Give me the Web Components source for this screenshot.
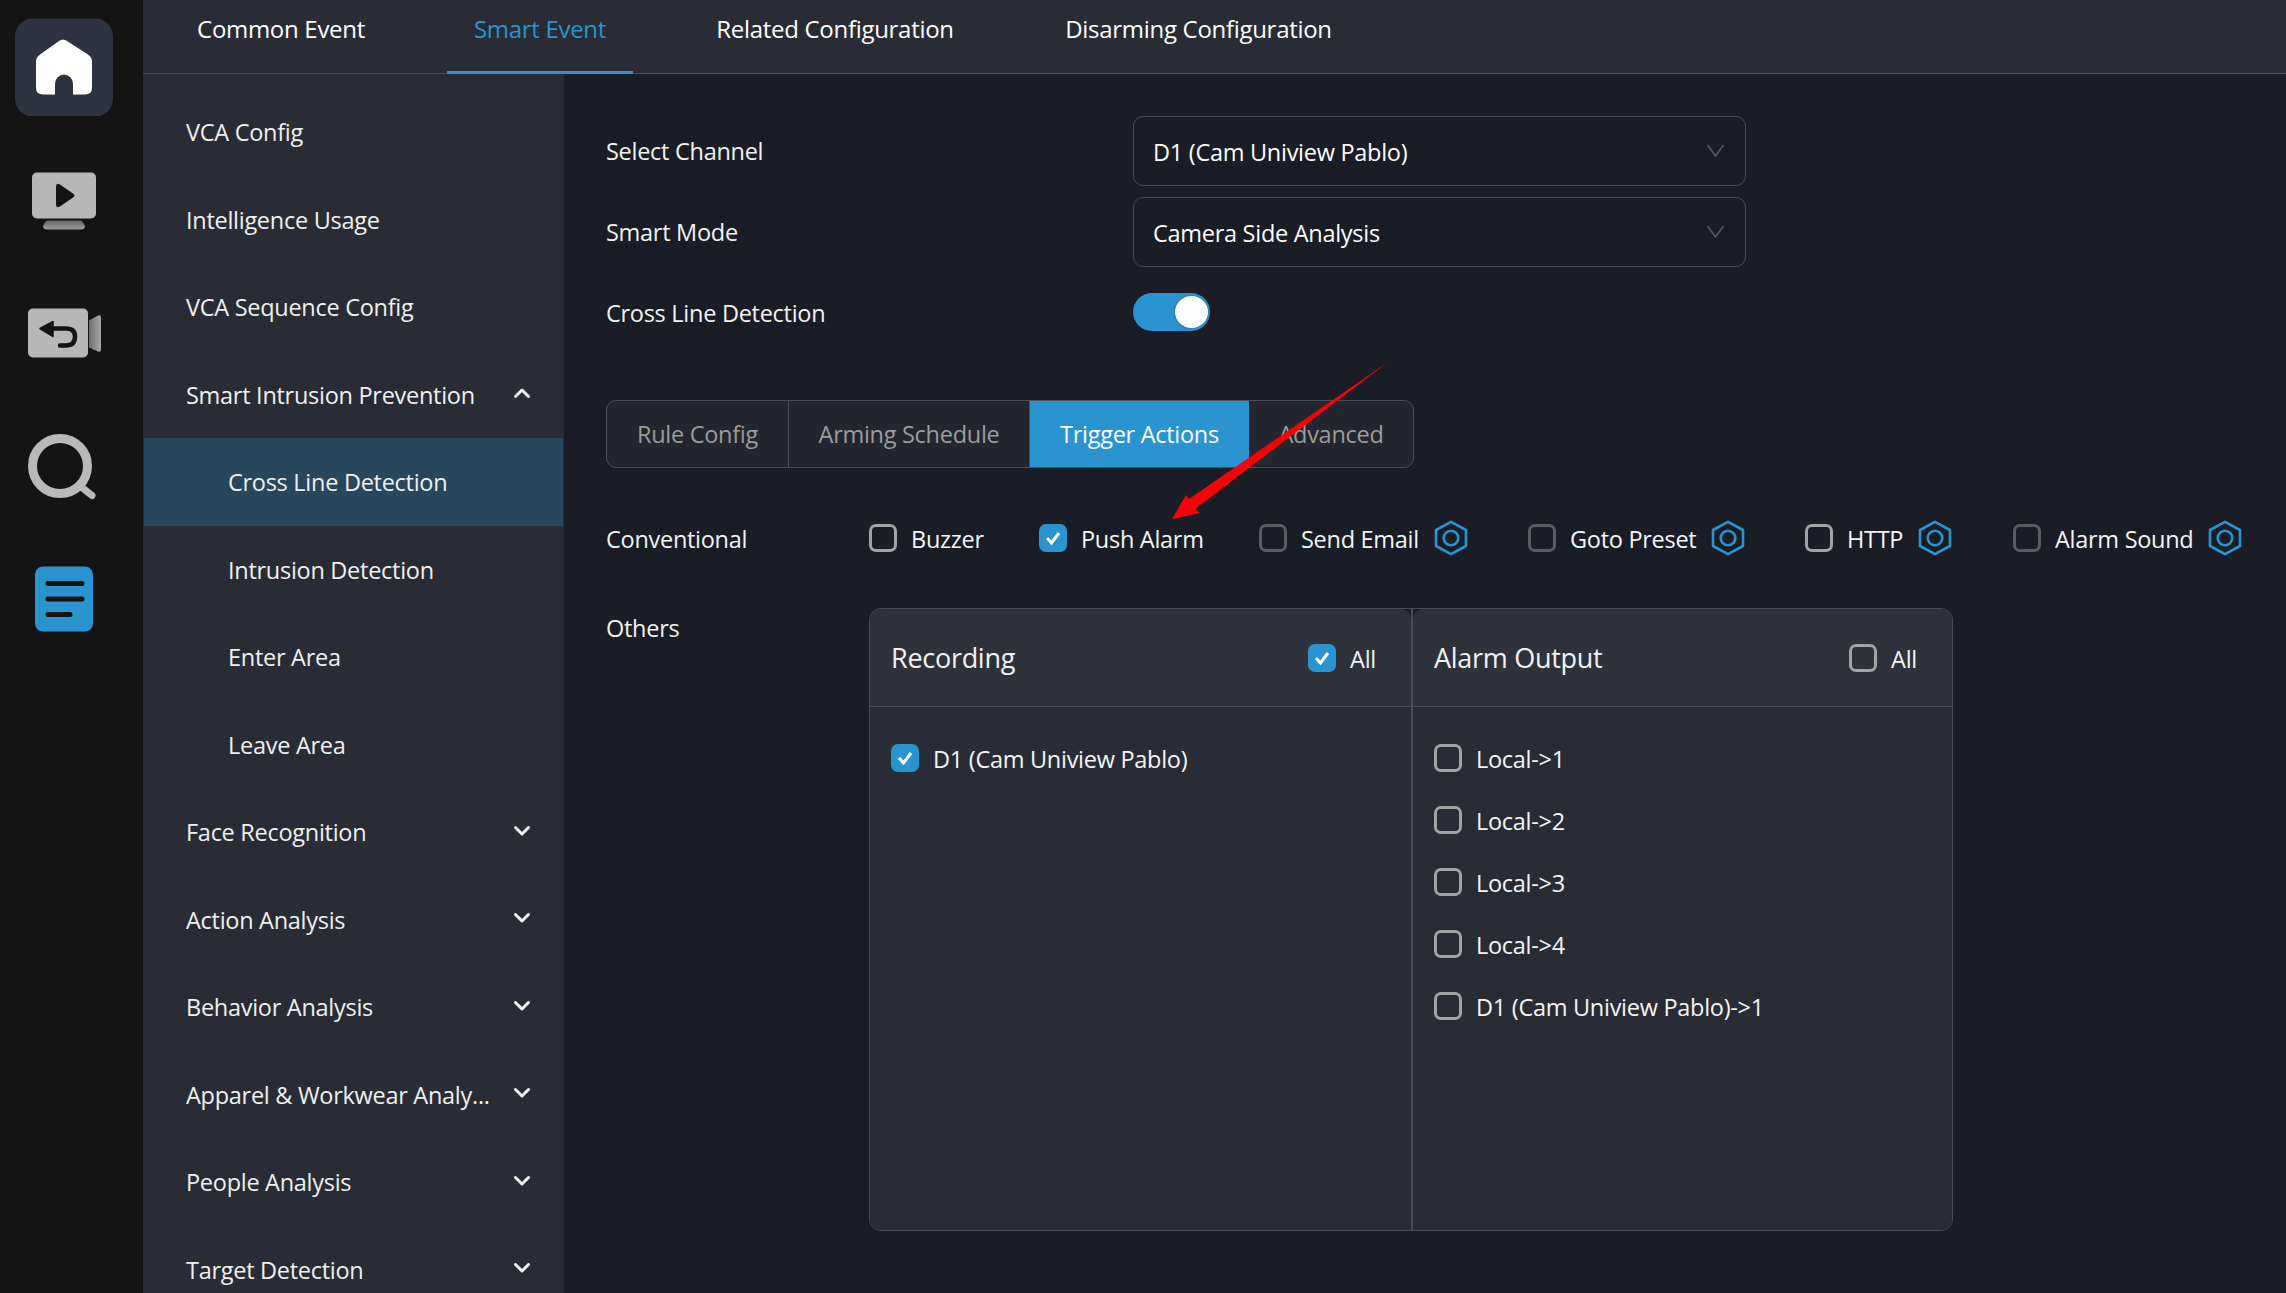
<!DOCTYPE html>
<html lang="en">
<head>
<meta charset="utf-8">
<title>Smart Event</title>
<style>
html, body { margin: 0; background: #1a1d25; }
body { font-family: 'Open Sans', 'Noto Sans', sans-serif; font-size: 23.5px; letter-spacing: -0.28px; color: #f2f2f2; }
</style>
</head>
<body>
<app-shell>
  <app-rail slot="rail">
    <rail-icon><svg viewBox="15 17.5 98 98"><rect x="15" y="18" width="98" height="98" rx="18" fill="#2e333f"/><path d="M63 39 Q65 39 67 40.5 L88 54 Q92 57 92 61 V87 Q92 94 85 94 H73 V83 A9 9 0 0 0 55 83 V94 H43 Q36 94 36 87 V61 Q36 57 40 54 L59 40.5 Q61 39 63 39Z" fill="#fff"/></svg></rail-icon>
    <rail-icon><svg viewBox="15 150.5 98 98"><defs><linearGradient id="st" x1="0" y1="0" x2="0" y2="1"><stop offset="0" stop-color="#666"/><stop offset="1" stop-color="#9a9a9a"/></linearGradient></defs><rect x="32" y="172" width="64" height="46" rx="5" fill="#b7b7b7"/><path d="M47 220 H81 Q85 224 85 226 Q85 229 81 229 H47 Q43 229 43 226 Q43 224 47 220Z" fill="url(#st)"/><path d="M56 186 Q56 182 60 184 L73 193 Q76 195 73 197 L60 206 Q56 208 56 204Z" fill="#141414"/></svg></rail-icon>
    <rail-icon><svg viewBox="15 283.5 98 98"><defs><linearGradient id="ln" x1="0" y1="0" x2="1" y2="0"><stop offset="0" stop-color="#707070"/><stop offset="1" stop-color="#a8a8a8"/></linearGradient></defs><rect x="28" y="308" width="60" height="49" rx="5" fill="#b7b7b7"/><path d="M89 320 L98 315 Q101 314 101 317 V349 Q101 352 98 351 L89 347Z" fill="url(#ln)"/><path d="M40 328 L53 321 V336Z" fill="#141414" stroke="#141414" stroke-width="1.5" stroke-linejoin="round"/><path d="M52 328 H66 Q75 328 75 336 Q75 345 66 345 H60" fill="none" stroke="#141414" stroke-width="4.5" stroke-linecap="round"/></svg></rail-icon>
    <rail-icon><svg viewBox="15 416.5 98 98"><circle cx="60" cy="465.5" r="27.5" fill="none" stroke="#b9b9b9" stroke-width="9"/><path d="M82 487 L92 495" stroke="#b9b9b9" stroke-width="7" stroke-linecap="round"/></svg></rail-icon>
    <rail-icon><svg viewBox="15 549.5 98 98"><rect x="35" y="566" width="58" height="65" rx="8" fill="#2a94d0"/><path d="M48 583 H82 M48 598.5 H82 M48 614 H70" stroke="#141414" stroke-width="5" stroke-linecap="round"/></svg></rail-icon>
  </app-rail>

  <top-tabs slot="top">
    <top-tab style="width:224px">Common Event</top-tab>
    <top-tab style="width:186px" active>Smart Event</top-tab>
    <top-tab style="width:296px">Related Configuration</top-tab>
    <top-tab style="width:323px">Disarming Configuration</top-tab>
  </top-tabs>

  <side-menu slot="side">
    <side-item>VCA Config</side-item>
    <side-item>Intelligence Usage</side-item>
    <side-item>VCA Sequence Config</side-item>
    <side-item chevron="up">Smart Intrusion Prevention</side-item>
    <side-item sub active>Cross Line Detection</side-item>
    <side-item sub>Intrusion Detection</side-item>
    <side-item sub>Enter Area</side-item>
    <side-item sub>Leave Area</side-item>
    <side-item chevron="down">Face Recognition</side-item>
    <side-item chevron="down">Action Analysis</side-item>
    <side-item chevron="down">Behavior Analysis</side-item>
    <side-item chevron="down">Apparel &amp; Workwear Analy...</side-item>
    <side-item chevron="down">People Analysis</side-item>
    <side-item chevron="down">Target Detection</side-item>
  </side-menu>

  <main-pane slot="main">
    <form-row label="Select Channel"><select-box>D1 (Cam Uniview Pablo)</select-box></form-row>
    <form-row label="Smart Mode"><select-box>Camera Side Analysis</select-box></form-row>
    <form-row label="Cross Line Detection"><toggle-switch></toggle-switch></form-row>

    <seg-tabs>
      <seg-tab style="width:182px">Rule Config</seg-tab>
      <seg-tab style="width:241px">Arming Schedule</seg-tab>
      <seg-tab style="width:219px" active>Trigger Actions</seg-tab>
      <seg-tab style="width:165px">Advanced</seg-tab>
    </seg-tabs>

    <conv-row label="Conventional">
      <check-box style="width:170px" bright>Buzzer</check-box>
      <check-box style="width:220px" checked>Push Alarm</check-box>
      <check-box style="width:269px">Send Email<hex-gear></hex-gear></check-box>
      <check-box style="width:277px">Goto Preset<hex-gear></hex-gear></check-box>
      <check-box style="width:208px" bright>HTTP<hex-gear></hex-gear></check-box>
      <check-box>Alarm Sound<hex-gear></hex-gear></check-box>
    </conv-row>

    <others-row label="Others">
      <list-panel>
        <panel-col title="Recording" style="width:543px">
          <check-box slot="all" checked>All</check-box>
          <panel-row><check-box checked>D1 (Cam Uniview Pablo)</check-box></panel-row>
        </panel-col>
        <panel-col title="Alarm Output" style="flex:1">
          <check-box slot="all" bright>All</check-box>
          <panel-row><check-box bright>Local-&gt;1</check-box></panel-row>
          <panel-row><check-box bright>Local-&gt;2</check-box></panel-row>
          <panel-row><check-box bright>Local-&gt;3</check-box></panel-row>
          <panel-row><check-box bright>Local-&gt;4</check-box></panel-row>
          <panel-row><check-box bright>D1 (Cam Uniview Pablo)-&gt;1</check-box></panel-row>
        </panel-col>
      </list-panel>
    </others-row>
  </main-pane>

  <red-arrow></red-arrow>
</app-shell>

<script>
const make = (name, css, html) => {
  customElements.define(name, class extends HTMLElement {
    connectedCallback() {
      if (this.shadowRoot) return;
      const root = this.attachShadow({mode: 'open'});
      const markup = typeof html === 'function' ? html(this) : html;
      root.innerHTML = `<style>${css}</style>${markup}`;
    }
  });
};

make('app-shell', `
  :host { display: grid; grid-template-columns: 143px 421px 1fr; grid-template-rows: 74px 1fr; width: 2286px; height: 1293px; overflow: hidden; position: relative; }
  .rail { grid-row: 1 / 3; }
  .top { grid-column: 2 / 4; }
`, `
  <div class="rail"><slot name="rail"></slot></div>
  <div class="top"><slot name="top"></slot></div>
  <slot name="side"></slot>
  <slot name="main"></slot>
  <slot></slot>
`);

make('app-rail', `:host { display: flex; flex-direction: column; height: 1293px; background: #141414; }`, `<slot></slot>`);
make('rail-icon', `
  :host { display: flex; height: 133px; align-items: center; padding-left: 15px; flex: none; }
  ::slotted(svg) { width: 98px; height: 98px; display: block; }
`, `<slot></slot>`);

make('top-tabs', `:host { display: flex; height: 74px; box-sizing: border-box; padding-left: 26px; gap: 54px; background: #292c35; border-bottom: 1px solid #454c5a; }`, `<slot></slot>`);
make('top-tab', `
  :host { display: flex; align-items: center; justify-content: center; height: 74px; box-sizing: border-box; padding-bottom: 14px; margin-bottom: -1px; border-bottom: 3px solid transparent; color: #fff; font-size: 24px; letter-spacing: -0.3px; }
  :host([active]) { color: #2a94d0; border-bottom-color: #2a94d0; }
`, `<slot></slot>`);

make('side-menu', `:host { display: block; background: #292c35; padding-top: 14px; overflow: hidden; height: 1219px; box-sizing: border-box; }`, `<slot></slot>`);
make('side-item', `
  :host { display: flex; align-items: center; justify-content: space-between; height: 87.5px; box-sizing: border-box; padding: 1px 33px 0 42px; color: #f0f0f0; margin: 0 1px; }
  :host([sub]) { padding-left: 84px; }
  :host([active]) { background: #28465c; }
  svg { width: 16px; height: 10px; margin-top: -3px; }
`, (el) => {
  const dir = el.getAttribute('chevron');
  const d = dir === 'up' ? 'M1.5 8.5 L8 2 L14.5 8.5' : 'M1.5 1.5 L8 8 L14.5 1.5';
  return `<slot></slot>${dir ? `<svg viewBox="0 0 16 10"><path d="${d}" fill="none" stroke="#f0f0f0" stroke-width="3" stroke-linecap="round" stroke-linejoin="round"/></svg>` : ''}`;
});

make('main-pane', `:host { display: flex; flex-direction: column; padding: 42px 0 0 42px; background: #1a1d25; min-width: 0; }`, `<slot></slot>`);
make('form-row', `
  :host { display: flex; align-items: center; height: 70px; margin-bottom: 11px; }
  .l { width: 527px; flex: none; }
`, (el) => `<div class="l">${el.getAttribute('label')}</div><slot></slot>`);

make('select-box', `
  :host { display: flex; align-items: center; justify-content: space-between; width: 613px; height: 70px; box-sizing: border-box; padding: 1px 20px 0 19px; border: 1px solid #4a4d55; border-radius: 10px; color: #fff; }
  svg { width: 19px; height: 13px; margin-top: -2px; }
`, `<slot></slot><svg viewBox="0 0 19 13"><path d="M1.5 1 L9.500 12 L17.500 1" fill="none" stroke="#55585f" stroke-width="1.6"/></svg>`);

make('toggle-switch', `
  :host { display: block; width: 77px; height: 38px; margin-top: -2px; border-radius: 19px; background: #2a94d0; position: relative; }
  i { position: absolute; right: 2px; top: 3px; width: 33px; height: 32px; border-radius: 50%; background: #fff; box-shadow: -1px 0 3px rgba(0,0,0,.2); }
`, `<i></i>`);

make('seg-tabs', `:host { display: flex; width: 808px; height: 68px; box-sizing: border-box; margin-top: 41px; border: 1px solid #4a4f59; border-radius: 10px; background: #23262e; overflow: hidden; }`, `<slot></slot>`);
make('seg-tab', `
  :host { display: flex; align-items: center; justify-content: center; box-sizing: border-box; border-right: 1px solid #4a4f59; color: #9c9c9c; margin-top: -1px; margin-bottom: -1px; }
  :host(:last-child) { border-right: none; flex: 1; }
  :host([active]) { background: #2a94d0; color: #fff; border-right: none; }
`, `<slot></slot>`);

make('conv-row', `
  :host { display: flex; align-items: center; height: 36px; margin-top: 52px; }
  .l { width: 263px; flex: none; padding-top: 1px; }
`, (el) => `<div class="l">${el.getAttribute('label')}</div><slot></slot>`);
make('others-row', `
  :host { display: flex; margin-top: 52px; }
  .l { width: 263px; flex: none; line-height: 40px; }
`, (el) => `<div class="l">${el.getAttribute('label')}</div><slot></slot>`);

make('check-box', `
  :host { display: flex; align-items: center; flex: none; color: #f5f5f5; padding-top: 2px; }
  .b { width: 28px; height: 28px; box-sizing: border-box; border: 3px solid #5a5c61; border-radius: 7px; margin: -2px 14px 0 0; flex: none; }
  :host([bright]) .b { border-color: #a3a3a5; }
  :host([checked]) .b { background: #2a94d0; border-color: #2a94d0; }
  svg { display: block; width: 22px; height: 22px; }
`, (el) => `<div class="b">${el.hasAttribute('checked') ? '<svg viewBox="0 0 22 22"><path d="M5 11 L9.500 16 L17 6" fill="none" stroke="#fff" stroke-width="3"/></svg>' : ''}</div><slot></slot>`);

make('hex-gear', `
  :host { display: block; width: 34px; height: 36px; margin: -2px 0 0 15px; flex: none; }
  svg { display: block; width: 34px; height: 36px; }
`, `<svg viewBox="0 0 34 36"><path d="M17 1.800 L32 10 V26 L17 34.200 L2 26 V10Z" fill="none" stroke="#2a94d0" stroke-width="2.600" stroke-linejoin="round"/><circle cx="17" cy="18" r="7.300" fill="none" stroke="#2a94d0" stroke-width="2.600"/></svg>`);

make('list-panel', `:host { display: flex; width: 1084px; height: 623px; box-sizing: border-box; border: 1px solid #454c5a; border-radius: 12px; overflow: hidden; }`, `<slot></slot>`);
make('panel-col', `
  :host { display: flex; flex-direction: column; box-sizing: border-box; }
  :host(:first-child) { border-right: 2px solid #454c5a; }
  .h { display: flex; align-items: center; justify-content: space-between; height: 98px; flex: none; box-sizing: border-box; padding: 0 35px 0 21px; background: #2f323b; border-bottom: 1px solid #454c5a; border-radius: 10px 10px 0 0; font-size: 27px; }
  .h ::slotted(check-box) { font-size: 23.5px; }
  .c { flex: 1; background: #292c35; padding-top: 20px; padding-left: 21px; }
`, (el) => `<div class="h"><span>${el.getAttribute('title')}</span><slot name="all"></slot></div><div class="c"><slot></slot></div>`);
make('panel-row', `:host { display: flex; align-items: center; height: 62px; }`, `<slot></slot>`);

make('red-arrow', `
  :host { position: absolute; left: 0; top: 0; width: 2286px; height: 1293px; pointer-events: none; }
  svg { display: block; width: 100%; height: 100%; }
`, `<svg viewBox="0 0 2286 1293"><polygon points="1388,362 1195,509 1200,513 1172,519 1186,495 1189,499" fill="#fb0007"/></svg>`);
</script>
</body>
</html>
